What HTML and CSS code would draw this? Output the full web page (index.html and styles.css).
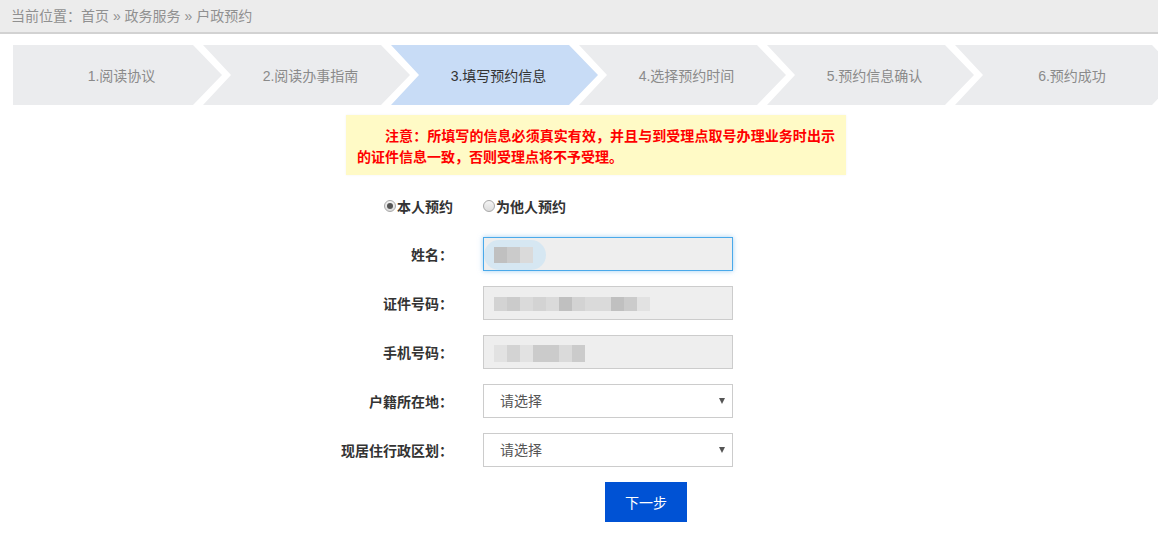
FILE: index.html
```html
<!DOCTYPE html>
<html>
<head>
    <meta charset="utf-8">
    <link rel="stylesheet" href="styles.css">
</head>
<body>
    <div class="crumb">当前位置：首页 » 政务服务 » 户政预约</div>

    <div class="steps">
        <div class="step first">1.阅读协议</div>
        <div class="step">2.阅读办事指南</div>
        <div class="step active">3.填写预约信息</div>
        <div class="step">4.选择预约时间</div>
        <div class="step">5.预约信息确认</div>
        <div class="step last">6.预约成功</div>
    </div>

    <div class="main">
        <div class="notice">注意：所填写的信息必须真实有效，并且与到受理点取号办理业务时出示的证件信息一致，否则受理点将不予受理。</div>

        <div class="who">
            <label class="radio checked"><span class="dot"></span>本人预约</label>
            <label class="radio"><span class="dot"></span>为他人预约</label>
        </div>

        <div class="row">
            <label class="label">姓名：</label>
            <div class="field">
                <input class="input focus" type="text">
                <div class="mask name">
                    <span class="smear"></span>
                    <span class="px a"></span><span class="px b"></span><span class="px d"></span>
                </div>
            </div>
        </div>

        <div class="row">
            <label class="label">证件号码：</label>
            <div class="field">
                <input class="input" type="text">
                <div class="mask idno">
                    <span class="px c"></span><span class="px b"></span><span class="px d"></span><span class="px c"></span>
                    <span class="px d"></span><span class="px a"></span><span class="px c"></span><span class="px d"></span>
                    <span class="px d"></span><span class="px a"></span><span class="px b"></span><span class="px e"></span>
                </div>
            </div>
        </div>

        <div class="row">
            <label class="label">手机号码：</label>
            <div class="field">
                <input class="input" type="text">
                <div class="mask phone">
                    <span class="px e"></span><span class="px c"></span><span class="px e"></span><span class="px b"></span>
                    <span class="px b"></span><span class="px d"></span><span class="px b"></span>
                </div>
            </div>
        </div>

        <div class="row">
            <label class="label">户籍所在地：</label>
            <div class="field select">
                <select><option>请选择</option></select>
            </div>
        </div>

        <div class="row">
            <label class="label">现居住行政区划：</label>
            <div class="field select">
                <select><option>请选择</option></select>
            </div>
        </div>

        <button class="next">下一步</button>
    </div>
</body>
</html>
```

FILE: styles.css
```css
* {
    margin: 0;
    padding: 0;
    box-sizing: border-box;
}

body {
    font-family: 'Liberation Sans', 'Noto Sans CJK SC', sans-serif;
    font-size: 14px;
    color: #333;
    background: #fff;
    overflow: hidden;
}

.crumb {
    height: 34px;
    line-height: 32px;
    padding-left: 11px;
    background: #ececec;
    border-bottom: 2px solid #d2d2d2;
    color: #909090;
}

/* steps */
.steps {
    display: flex;
    height: 60px;
    margin: 11px 0 0 13px;
    overflow: hidden;
}

.step {
    flex: none;
    width: 207px;
    margin-left: -19px;
    padding-left: 8px;
    padding-bottom: 1px;
    display: flex;
    align-items: center;
    justify-content: center;
    background: #ebecee;
    color: #8a8a8a;
    clip-path: polygon(0 0, calc(100% - 29px) 0, 100% 50%, calc(100% - 29px) 100%, 0 100%, 28px 50%);
}

.step.first {
    width: 209px;
    margin-left: 0;
    clip-path: polygon(0 0, calc(100% - 29px) 0, 100% 50%, calc(100% - 29px) 100%, 0 100%);
}

.step.last {
    width: 226px;
}

.step.active {
    background: #c8dcf6;
    color: #333;
}

/* main */
.main {
    padding-left: 330px;
}

.notice {
    width: 500px;
    margin: 10px 0 0 16px;
    padding: 11px 11px 7px;
    background: #fffac6;
    box-shadow: 0 0 2px rgba(0, 0, 0, 0.06);
    color: #f00;
    font-weight: bold;
    line-height: 21px;
    text-indent: 2em;
    text-align: justify;
}

.who {
    display: flex;
    margin: 21px 0 0 54px;
    height: 20px;
    align-items: center;
    font-weight: bold;
}

.radio {
    display: flex;
    align-items: center;
    margin-right: 30px;
}

.dot {
    width: 12px;
    height: 12px;
    margin-right: 1px;
    border: 1px solid #a8a8a8;
    border-radius: 50%;
    background: linear-gradient(#f4f4f4, #dcdcdc);
    display: flex;
    align-items: center;
    justify-content: center;
}

.radio.checked .dot::after {
    content: '';
    width: 6px;
    height: 6px;
    border-radius: 50%;
    background: #555;
}

.row {
    display: flex;
    align-items: center;
    margin-top: 15px;
}

.who + .row {
    margin-top: 21px;
}

.label {
    width: 123px;
    margin-right: 30px;
    text-align: right;
    white-space: nowrap;
    font-weight: bold;
    color: #333;
}

.field {
    position: relative;
    width: 250px;
    height: 34px;
}

.input {
    width: 100%;
    height: 100%;
    border: 1px solid #ccc;
    background: #eee;
    outline: none;
}

.input.focus {
    border-color: #4aa9ea;
    box-shadow: 0 0 5px rgba(102, 175, 233, 0.6);
}

/* blurred values */
.mask {
    position: absolute;
    left: 11px;
    display: flex;
}

.mask.name { top: 10px; }
.mask.idno { top: 11px; }
.mask.phone { top: 10px; }

.smear {
    position: absolute;
    left: -10px;
    top: -7px;
    width: 62px;
    height: 30px;
    border-radius: 15px;
    background: #d6e7f2;
}

.px {
    position: relative;
    width: 13px;
    height: 14px;
}

.mask.name .px { height: 16px; }
.mask.phone .px { height: 17px; }

.px.a { background: #c0c0c0; }
.px.b { background: #cbcbcb; }
.px.c { background: #d3d3d3; }
.px.d { background: #dadada; }
.px.e { background: #e2e2e2; }

.select select {
    width: 100%;
    height: 100%;
    padding-left: 16px;
    border: 1px solid #ccc;
    background: #fff;
    color: #555;
    font-family: inherit;
    font-size: 14px;
    appearance: none;
    -webkit-appearance: none;
    outline: none;
}

.select::after {
    content: '';
    position: absolute;
    right: 8px;
    top: 14px;
    border-left: 3px solid transparent;
    border-right: 3px solid transparent;
    border-top: 6px solid #555;
    pointer-events: none;
}

.next {
    display: block;
    width: 82px;
    height: 40px;
    margin: 15px 0 0 275px;
    border: none;
    background: #0052d4;
    color: #fff;
    font-family: inherit;
    font-size: 14px;
}
```
